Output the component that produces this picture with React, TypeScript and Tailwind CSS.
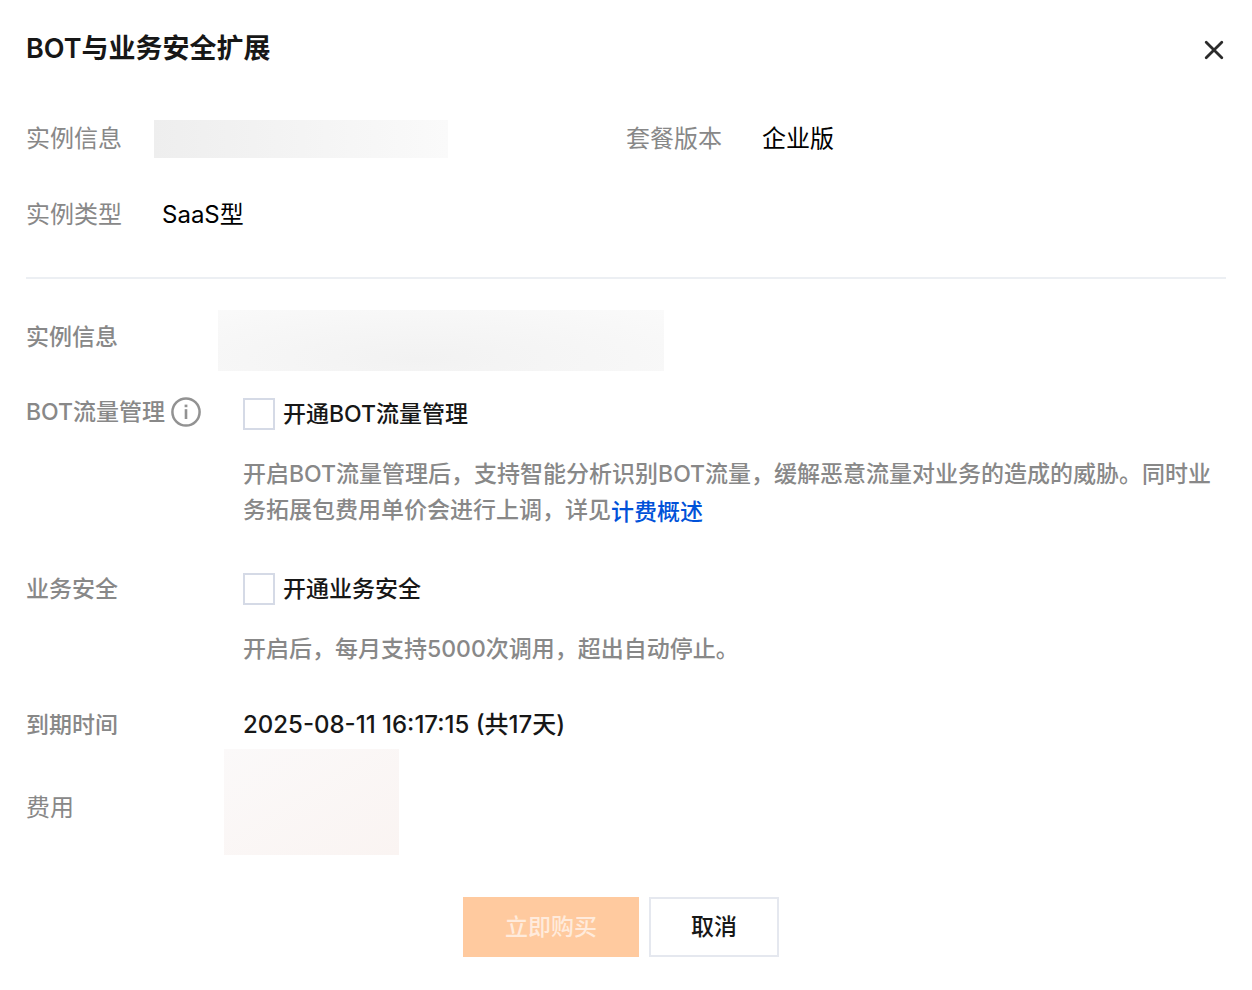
import React, { useState } from 'react';

interface InfoItemProps {
  label: string;
  children: React.ReactNode;
}

interface FormRowProps {
  label: React.ReactNode;
  className?: string;
  children: React.ReactNode;
}

interface OptionProps {
  id: string;
  label: string;
  checked: boolean;
  onChange: (checked: boolean) => void;
}

function CloseIcon() {
  return (
    <svg width="20" height="20" viewBox="0 0 20 20" fill="none" stroke="#2b2b2b" strokeWidth="2.8" strokeLinecap="round">
      <path d="M2.2 2.2L17.8 17.8M17.8 2.2L2.2 17.8" />
    </svg>
  );
}

function InfoIcon() {
  return (
    <svg width="30" height="30" viewBox="0 0 30 30" fill="none" stroke="#929292">
      <circle cx="15" cy="15" r="13.6" strokeWidth="2.5" />
      <path d="M15 12.2V22" strokeWidth="2.6" />
      <path d="M15 7.6V10.2" strokeWidth="2.8" />
    </svg>
  );
}

function InfoItem({ label, children }: InfoItemProps) {
  return (
    <div className="flex h-[76px] items-center">
      <dt className="shrink-0 text-[#888888]">{label}</dt>
      <dd className="text-black">{children}</dd>
    </div>
  );
}

function FormRow({ label, className = '', children }: FormRowProps) {
  return (
    <div className={`flex ${className}`}>
      <div className="w-48 shrink-0 text-[#888888]">{label}</div>
      <div className="min-w-0 flex-1">{children}</div>
    </div>
  );
}

function Option({ id, label, checked, onChange }: OptionProps) {
  return (
    <div className="flex h-9 items-center gap-2">
      <input
        id={id}
        type="checkbox"
        checked={checked}
        onChange={(e) => onChange(e.target.checked)}
        className="size-8 shrink-0 appearance-none border-2 border-[#d5dae6] bg-white checked:border-[#ff6a00] checked:bg-[#ff6a00]"
      />
      <label htmlFor={id} className="text-[#171717]">
        {label}
      </label>
    </div>
  );
}

export default function App() {
  const [bot, setBot] = useState(false);
  const [security, setSecurity] = useState(false);

  return (
    <div
      role="dialog"
      aria-labelledby="dialog-title"
      className="bg-white px-[26px] pt-[29px] pb-8 font-['Inter','Noto_Sans_CJK_SC',sans-serif] text-[23px] leading-9"
    >
      {/* Header */}
      <header className="flex h-10 items-center justify-between">
        <h1 id="dialog-title" className="text-[27px] font-semibold text-[#171717]">
          BOT与业务安全扩展
        </h1>
        <button type="button" aria-label="关闭" className="mt-0.5 mr-0.5">
          <CloseIcon />
        </button>
      </header>

      {/* Instance summary */}
      <dl className="mt-8 grid grid-cols-2 border-b-2 border-[#eceff3] pb-6 text-2xl">
        <InfoItem label="实例信息">
          <div className="ml-8 h-[38px] w-[294px] bg-linear-to-r from-[#eeeeee] to-[#fafafa]" />
        </InfoItem>
        <InfoItem label="套餐版本">
          <span className="ml-10">企业版</span>
        </InfoItem>
        <InfoItem label="实例类型">
          <span className="ml-10">SaaS型</span>
        </InfoItem>
      </dl>

      <form className="font-medium" onSubmit={(e) => e.preventDefault()}>
        <FormRow label="实例信息" className="pt-[31px] leading-[54px]">
          <div className="h-[61px] w-[446px] bg-radial-[at_45%_80%] from-[#f2f2f2] to-[#fafafa]" />
        </FormRow>

        <FormRow
          className="mt-[25px]"
          label={
            <span className="flex h-8 items-center gap-1.5">
              BOT流量管理
              <InfoIcon />
            </span>
          }
        >
          <div className="pl-[25px]">
            <Option id="bot" label="开通BOT流量管理" checked={bot} onChange={setBot} />
            <p className="mt-6 text-[#888888]">
              开启BOT流量管理后，支持智能分析识别BOT流量，缓解恶意流量对业务的造成的威胁。同时业务拓展包费用单价会进行上调，详见
              <a href="#billing" className="inline-block align-middle leading-8 text-[#0052d9]">
                计费概述
              </a>
            </p>
          </div>
        </FormRow>

        <FormRow label="业务安全" className="mt-[43px]">
          <div className="pl-[25px]">
            <Option id="security" label="开通业务安全" checked={security} onChange={setSecurity} />
            <p className="mt-6 text-[#888888]">开启后，每月支持5000次调用，超出自动停止。</p>
          </div>
        </FormRow>

        <FormRow label="到期时间" className="mt-10">
          <p className="pl-[25px] text-2xl leading-9 text-[#171717]">2025-08-11 16:17:15 (共17天)</p>
        </FormRow>

        <FormRow
          label={<span className="block pt-3 text-2xl leading-9 font-normal">费用</span>}
          className="mt-1.5 items-center"
        >
          <div className="ml-1.5 h-[106px] w-[175px] bg-linear-to-br from-[#fbf9f9] to-[#faf4f2]" />
        </FormRow>

        {/* Actions */}
        <div className="mt-[42px] flex justify-center">
          <button
            type="submit"
            disabled={!bot && !security}
            className="mr-2.5 h-[60px] w-44 bg-[#ff6a00] text-white disabled:bg-[#ffca9f] disabled:text-[#ffebdc]"
          >
            立即购买
          </button>
          <button
            type="button"
            className="mr-2.5 h-[60px] w-[130px] border-2 border-[#e5e8ef] bg-white text-[#171717]"
          >
            取消
          </button>
        </div>
      </form>
    </div>
  );
}
